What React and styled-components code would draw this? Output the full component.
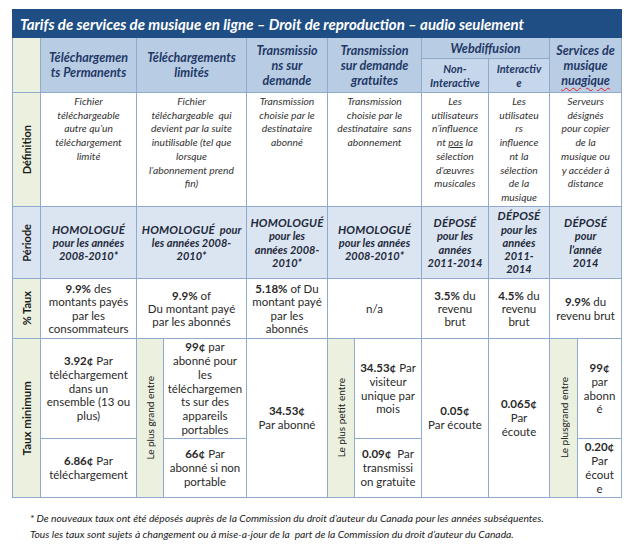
import React from 'react';
import styled, { createGlobalStyle } from 'styled-components';

const GlobalStyle = createGlobalStyle`
  html, body {
    margin: 0;
    background: #ffffff;
  }
  body {
    font-family: Lato, "Open Sans", sans-serif;
    color: #222;
  }
`;

const colWidths = [28, 96, 27, 83, 81, 27, 67, 67, 61, 28, 44];

const App = () => {
  return (
    <Page>
      <GlobalStyle />
      <Sheet>
        <colgroup>
          {colWidths.map((w, i) => (
            <col key={i} style={{ width: w }} />
          ))}
        </colgroup>
        <tbody>
          <Row $h={28}>
            <TitleCell colSpan={11}>
              Tarifs de services de musique en ligne – Droit de reproduction – audio seulement
            </TitleCell>
          </Row>

          <Row $h={21}>
            <Stub rowSpan={2} $bg="#ebf1de" />
            <HeadCell rowSpan={2}>Téléchargemen<br />ts Permanents</HeadCell>
            <HeadCell rowSpan={2} colSpan={2}>Téléchargements<br />limités</HeadCell>
            <HeadCell rowSpan={2}>Transmissio<br />ns sur<br />demande</HeadCell>
            <HeadCell rowSpan={2} colSpan={2}>Transmission<br />sur demande<br />gratuites</HeadCell>
            <HeadCell colSpan={2}>Webdiffusion</HeadCell>
            <HeadCell rowSpan={2} colSpan={2}>
              Services de<br />musique<br /><Misspelt>nuagique</Misspelt>
            </HeadCell>
          </Row>
          <Row $h={34}>
            <HeadCell $sub>Non-<br />Interactive</HeadCell>
            <HeadCell $sub>Interactiv<br />e</HeadCell>
          </Row>

          <Row $h={114}>
            <Stub $bg="#ebf1de"><SideLabel>Définition</SideLabel></Stub>
            <DefCell>Fichier<br />téléchargeable<br />autre qu’un<br />téléchargement<br />limité</DefCell>
            <DefCell colSpan={2}>
              Fichier<br />téléchargeable&nbsp; qui<br />devient par la suite<br />inutilisable (tel que<br />lorsque<br />l’abonnement prend<br />fin)
            </DefCell>
            <DefCell>Transmission<br />choisie par le<br />destinataire<br />abonné</DefCell>
            <DefCell colSpan={2}>Transmission<br />choisie par le<br />destinataire&nbsp; sans<br />abonnement</DefCell>
            <DefCell>
              Les<br />utilisateurs<br />n’influence<br />nt <u>pas</u> la<br />sélection<br />d’œuvres<br />musicales
            </DefCell>
            <DefCell>
              Les<br />utilisateu<br />rs<br />influence<br />nt la<br />sélection<br />de la<br />musique
            </DefCell>
            <DefCell colSpan={2}>
              Serveurs<br />désignés<br />pour copier<br />de la<br />musique ou<br />y accéder à<br />distance
            </DefCell>
          </Row>

          <Row $h={72}>
            <Stub $bg="#dbe5f1"><SideLabel>Période</SideLabel></Stub>
            <PeriodCell><Loud>HOMOLOGUÉ</Loud><br />pour les années<br />2008-2010*</PeriodCell>
            <PeriodCell colSpan={2}><Loud>HOMOLOGUÉ</Loud>&nbsp; pour<br />les années 2008-<br />2010*</PeriodCell>
            <PeriodCell><Loud>HOMOLOGUÉ</Loud><br />pour les<br />années 2008-<br />2010*</PeriodCell>
            <PeriodCell colSpan={2}><Loud>HOMOLOGUÉ</Loud><br />pour les années<br />2008-2010*</PeriodCell>
            <PeriodCell><Loud>DÉPOSÉ</Loud><br />pour les<br />années<br />2011-2014</PeriodCell>
            <PeriodCell><Loud>DÉPOSÉ</Loud><br />pour les<br />années<br />2011-<br />2014</PeriodCell>
            <PeriodCell colSpan={2}><Loud>DÉPOSÉ</Loud><br />pour<br />l’année<br />2014</PeriodCell>
          </Row>

          <Row $h={60}>
            <Stub $bg="#ebf1de"><SideLabel>% Taux</SideLabel></Stub>
            <RateCell><b>9.9%</b> des<br />montants payés<br />par les<br />consommateurs</RateCell>
            <RateCell colSpan={2}><b>9.9%</b> of<br />Du montant payé<br />par les abonnés</RateCell>
            <RateCell><b>5.18%</b> of Du<br />montant payé<br />par les<br />abonnés</RateCell>
            <RateCell colSpan={2}>n/a</RateCell>
            <RateCell><b>3.5%</b> du<br />revenu<br />brut</RateCell>
            <RateCell><b>4.5%</b> du<br />revenu<br />brut</RateCell>
            <RateCell colSpan={2}><b>9.9%</b> du<br />revenu brut</RateCell>
          </Row>

          <Row $h={100}>
            <Stub rowSpan={2} $bg="#ebf1de"><SideLabel $size={11.5}>Taux minimum</SideLabel></Stub>
            <MinCell><b>3.92¢</b> Par<br />téléchargement<br />dans un<br />ensemble (13 ou<br />plus)</MinCell>
            <Stub rowSpan={2} $bg="#ebf1de"><InnerLabel>Le plus grand entre</InnerLabel></Stub>
            <MinCell>
              <b>99¢</b> par<br />abonné pour<br />les<br />téléchargemen<br />ts sur des<br />appareils<br />portables
            </MinCell>
            <MinCell rowSpan={2}><b>34.53¢</b><br />Par abonné</MinCell>
            <Stub rowSpan={2} $bg="#ebf1de"><InnerLabel>Le plus petit entre</InnerLabel></Stub>
            <MinCell><b>34.53¢</b> Par<br />visiteur<br />unique par<br />mois</MinCell>
            <MinCell rowSpan={2}><b>0.05¢</b><br />Par écoute</MinCell>
            <MinCell rowSpan={2}><b>0.065¢</b><br />Par<br />écoute</MinCell>
            <Stub rowSpan={2} $bg="#ebf1de"><InnerLabel>Le plusgrand entre</InnerLabel></Stub>
            <MinCell><b>99¢</b><br />par<br />abonn<br />é</MinCell>
          </Row>
          <Row $h={59}>
            <MinCell><b>6.86¢</b> Par<br />téléchargement</MinCell>
            <MinCell><b>66¢</b> Par<br />abonné si non<br />portable</MinCell>
            <MinCell><b>0.09¢</b>&nbsp; Par<br />transmissi<br />on gratuite</MinCell>
            <MinCell><b>0.20¢</b><br />Par<br />écout<br />e</MinCell>
          </Row>
        </tbody>
      </Sheet>

      <Notes>
        <Note>* De nouveaux taux ont été déposés auprès de la Commission du droit d’auteur du Canada pour les années subséquentes.</Note>
        <Note>Tous les taux sont sujets à changement ou à mise-a-jour de la&nbsp; part de la Commission du droit d’auteur du Canada.</Note>
      </Notes>
    </Page>
  );
};

export default App;

const Page = styled.div`
  padding: 9px 0 0 12px;
  width: 637px;
  height: 555px;
  box-sizing: border-box;
`;

const Sheet = styled.table`
  border-collapse: collapse;
  table-layout: fixed;
  width: 610px;
`;

const Row = styled.tr`
  height: ${(p) => p.$h}px;
`;

const baseCell = `
  border: 1px solid #8faacc;
  padding: 0 1px;
  text-align: center;
  overflow: hidden;
`;

const TitleCell = styled.th`
  border: 1px solid #1f4e84;
  background: #1f4e84;
  color: #ffffff;
  font-size: 15px;
  font-weight: 700;
  font-style: italic;
  text-align: left;
  padding: 0 7px;
  white-space: nowrap;
`;

const HeadCell = styled.th`
  ${baseCell}
  background: ${(p) => (p.$sub ? '#c6d7ec' : '#b8cce4')};
  color: #1f3864;
  font-size: ${(p) => (p.$sub ? '11px' : '12.5px')};
  font-weight: 700;
  font-style: italic;
  line-height: ${(p) => (p.$sub ? '14px' : '15px')};
  vertical-align: middle;
`;

const Misspelt = styled.span`
  text-decoration: underline wavy #e02020;
  text-decoration-thickness: 1px;
  text-underline-offset: 2px;
`;

const Stub = styled.td`
  ${baseCell}
  padding: 0;
  background: ${(p) => p.$bg};
  vertical-align: middle;
`;

const SideLabel = styled.div`
  writing-mode: vertical-rl;
  transform: rotate(180deg);
  margin: 0 auto;
  font-size: ${(p) => p.$size || 11}px;
  font-weight: 700;
  color: #1a1a1a;
  white-space: nowrap;
`;

const InnerLabel = styled.div`
  writing-mode: vertical-rl;
  transform: rotate(180deg);
  margin: 0 auto;
  font-size: 10px;
  color: #222;
  white-space: nowrap;
`;

const DefCell = styled.td`
  ${baseCell}
  background: #ffffff;
  vertical-align: top;
  padding-top: 2px;
  font-size: 10.3px;
  font-style: italic;
  line-height: 13.7px;
  color: #333;
  white-space: nowrap;
`;

const PeriodCell = styled.td`
  ${baseCell}
  background: #dbe5f1;
  vertical-align: middle;
  font-size: 11px;
  font-style: italic;
  font-weight: 700;
  line-height: 13.2px;
  color: #1f2a3c;
  white-space: nowrap;
`;

const Loud = styled.span`
  font-size: 11.5px;
  letter-spacing: 0.2px;
`;

const RateCell = styled.td`
  ${baseCell}
  background: #ffffff;
  vertical-align: middle;
  font-size: 11.5px;
  line-height: 13.3px;
  color: #2a2a2a;
  white-space: nowrap;
`;

const MinCell = styled.td`
  ${baseCell}
  background: #ffffff;
  vertical-align: middle;
  font-size: 11.5px;
  line-height: 13.8px;
  color: #2a2a2a;
  white-space: nowrap;
`;

const Notes = styled.div`
  padding: 14px 0 0 18px;
  display: flex;
  flex-direction: column;
  gap: 3px;
`;

const Note = styled.p`
  margin: 0;
  font-size: 10.3px;
  font-style: italic;
  line-height: 13px;
  color: #1a1a1a;
  white-space: nowrap;
`;
